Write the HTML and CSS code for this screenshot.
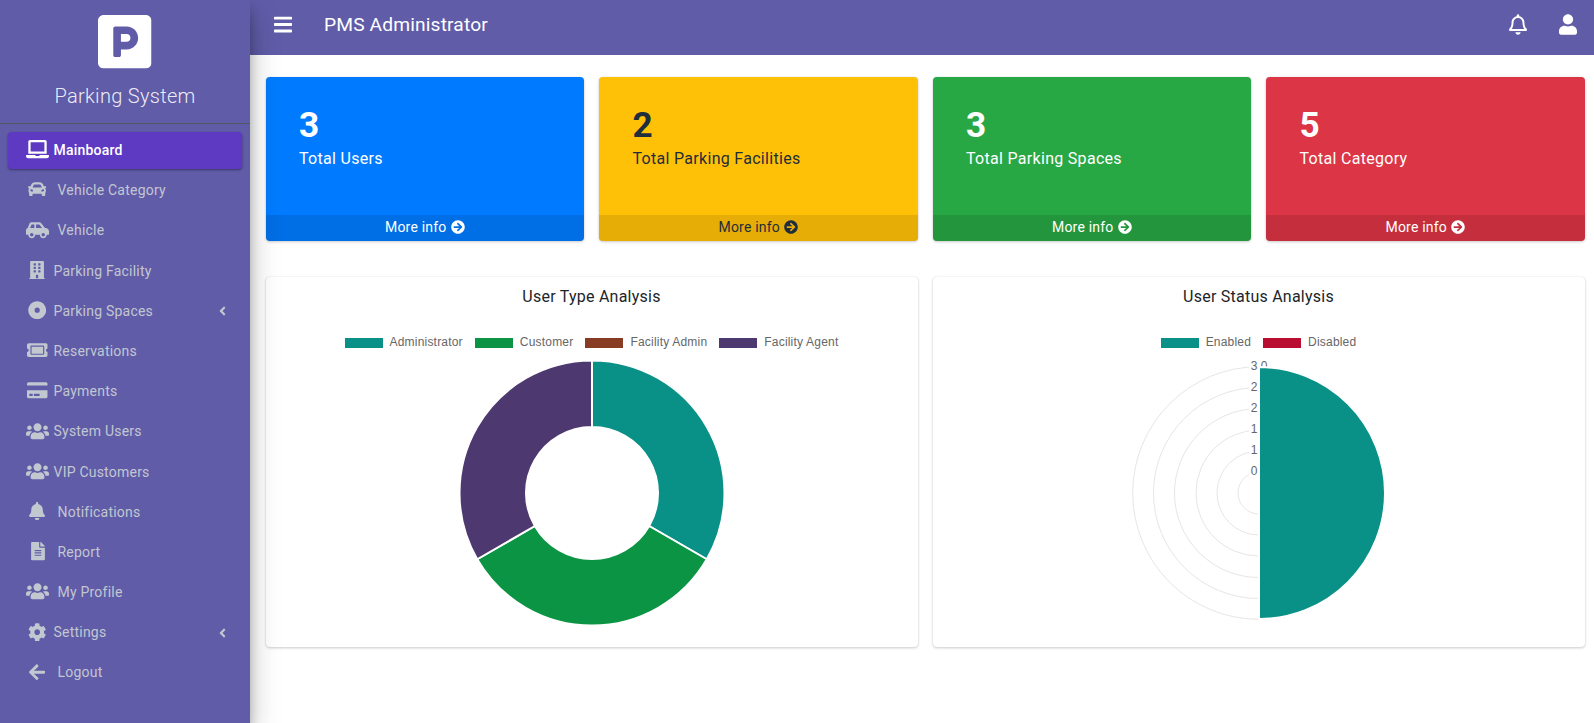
FILE: index.html
```html
<!DOCTYPE html>
<html lang="en">
<head>
<meta charset="utf-8">
<title>PMS Administrator</title>
<link rel="stylesheet" href="styles.css">
</head>
<body>
<svg class="defs" aria-hidden="true">
  <symbol id="i-bars" viewBox="0 0 448 512"><path d="M16 132h416c8.837 0 16-7.163 16-16V76c0-8.837-7.163-16-16-16H16C7.163 60 0 67.163 0 76v40c0 8.837 7.163 16 16 16zm0 160h416c8.837 0 16-7.163 16-16v-40c0-8.837-7.163-16-16-16H16c-8.837 0-16 7.163-16 16v40c0 8.837 7.163 16 16 16zm0 160h416c8.837 0 16-7.163 16-16v-40c0-8.837-7.163-16-16-16H16c-8.837 0-16 7.163-16 16v40c0 8.837 7.163 16 16 16z"/></symbol>
  <symbol id="i-bell-o" viewBox="0 0 448 512"><path d="M439.39 362.29c-19.32-20.76-55.47-51.99-55.47-154.29 0-77.7-54.48-139.9-127.94-155.16V32c0-17.67-14.32-32-31.98-32s-31.98 14.33-31.98 32v20.84C118.56 68.1 64.08 130.3 64.08 208c0 102.3-36.15 133.53-55.47 154.29-6 6.45-8.66 14.16-8.61 21.71.11 16.4 12.98 32 32.1 32h383.8c19.12 0 32-15.6 32.1-32 .05-7.55-2.61-15.27-8.61-21.71zM67.53 368c21.22-27.97 44.42-74.33 44.53-159.42 0-.2-.06-.38-.06-.58 0-61.86 50.14-112 112-112s112 50.14 112 112c0 .2-.06.38-.06.58.11 85.1 23.31 131.46 44.53 159.42H67.53zM224 512c35.32 0 63.97-28.65 63.97-64H160.03c0 35.35 28.65 64 63.97 64z"/></symbol>
  <symbol id="i-bell" viewBox="0 0 448 512"><path d="M224 512c35.32 0 63.97-28.65 63.97-64H160.03c0 35.35 28.65 64 63.97 64zm215.39-149.71c-19.32-20.76-55.47-51.99-55.47-154.29 0-77.7-54.48-139.9-127.94-155.16V32c0-17.67-14.32-32-31.98-32s-31.98 14.33-31.98 32v20.84C118.56 68.1 64.08 130.3 64.08 208c0 102.3-36.15 133.53-55.47 154.29-6 6.45-8.66 14.16-8.61 21.71.11 16.4 12.98 32 32.1 32h383.8c19.12 0 32-15.6 32.1-32 .05-7.55-2.61-15.27-8.61-21.71z"/></symbol>
  <symbol id="i-user" viewBox="0 0 448 512"><path d="M224 256c70.7 0 128-57.3 128-128S294.7 0 224 0 96 57.3 96 128s57.3 128 128 128zm89.6 32h-16.7c-22.2 10.2-46.9 16-72.9 16s-50.6-5.8-72.9-16h-16.7C60.2 288 0 348.2 0 422.4V464c0 26.5 21.5 48 48 48h352c26.5 0 48-21.5 48-48v-41.6c0-74.2-60.2-134.4-134.4-134.4z"/></symbol>
  <symbol id="i-arrow-c" viewBox="0 0 512 512"><path d="M256 8c137 0 248 111 248 248S393 504 256 504 8 393 8 256 119 8 256 8zm-28.9 143.6l75.5 72.4H120c-13.3 0-24 10.7-24 24v16c0 13.3 10.7 24 24 24h182.6l-75.5 72.4c-9.7 9.3-9.9 24.8-.4 34.3l11 10.9c9.4 9.4 24.6 9.4 33.9 0L404.3 273c9.4-9.4 9.4-24.6 0-33.9L271.6 106.3c-9.4-9.4-24.6-9.4-33.9 0l-11 10.9c-9.5 9.6-9.3 25.1.4 34.4z"/></symbol>
  <symbol id="i-arrow-l" viewBox="0 0 448 512"><path d="M257.5 445.1l-22.2 22.2c-9.4 9.4-24.6 9.4-33.9 0L7 273c-9.4-9.4-9.4-24.6 0-33.9L201.4 44.7c9.4-9.4 24.6-9.4 33.9 0l22.2 22.2c9.5 9.5 9.3 25-.4 34.3L136.6 216H424c13.3 0 24 10.7 24 24v32c0 13.3-10.7 24-24 24H136.6l120.5 114.8c9.8 9.3 10 24.8.4 34.3z"/></symbol>
  <symbol id="i-angle" viewBox="0 0 256 512"><path d="M31.7 239l136-136c9.4-9.4 24.6-9.4 33.9 0l22.6 22.6c9.4 9.4 9.4 24.6 0 33.9L127.9 256l96.4 96.4c9.4 9.4 9.4 24.6 0 33.9L201.7 409c-9.4 9.4-24.6 9.4-33.9 0l-136-136c-9.5-9.4-9.5-24.6-.1-34z"/></symbol>
  <symbol id="i-users" viewBox="0 0 640 512"><path d="M96 224c35.3 0 64-28.7 64-64s-28.7-64-64-64-64 28.7-64 64 28.7 64 64 64zm448 0c35.3 0 64-28.7 64-64s-28.7-64-64-64-64 28.7-64 64 28.7 64 64 64zm32 32h-64c-17.6 0-33.5 7.1-45.1 18.6 40.3 22.1 68.9 62 75.1 109.4h66c17.7 0 32-14.3 32-32v-32c0-35.3-28.7-64-64-64zm-256 0c61.9 0 112-50.1 112-112S381.9 32 320 32 208 82.1 208 144s50.1 112 112 112zm76.8 32h-8.3c-20.8 10-43.9 16-68.5 16s-47.6-6-68.5-16h-8.3C179.6 288 128 339.6 128 403.2V432c0 26.5 21.5 48 48 48h288c26.5 0 48-21.5 48-48v-28.8c0-63.6-51.6-115.2-115.2-115.2zm-223.7-13.4C161.5 263.1 145.6 256 128 256H64c-35.3 0-64 28.7-64 64v32c0 17.7 14.3 32 32 32h65.9c6.3-47.4 34.9-87.3 75.2-109.4z"/></symbol>
  <symbol id="i-cog" viewBox="0 0 512 512"><path d="M487.4 315.7l-42.6-24.6c4.3-23.2 4.3-47 0-70.2l42.6-24.6c4.9-2.8 7.1-8.6 5.5-14-11.1-35.6-30-67.8-54.7-94.6-3.8-4.1-10-5.1-14.8-2.3L380.8 110c-17.9-15.4-38.5-27.3-60.8-35.1V25.8c0-5.6-3.9-10.5-9.4-11.7-36.7-8.2-74.3-7.8-109.2 0-5.5 1.2-9.4 6.1-9.4 11.7V75c-22.2 7.9-42.8 19.8-60.8 35.1L88.7 85.5c-4.9-2.8-11-1.9-14.8 2.3-24.7 26.7-43.6 58.9-54.7 94.6-1.7 5.4.6 11.2 5.5 14L67.3 221c-4.3 23.2-4.3 47 0 70.2l-42.6 24.6c-4.9 2.8-7.1 8.6-5.5 14 11.1 35.6 30 67.8 54.7 94.6 3.8 4.1 10 5.1 14.8 2.3l42.6-24.6c17.9 15.4 38.5 27.3 60.8 35.1v49.2c0 5.6 3.9 10.5 9.4 11.7 36.7 8.2 74.3 7.8 109.2 0 5.5-1.2 9.4-6.1 9.4-11.7v-49.2c22.2-7.9 42.8-19.8 60.8-35.1l42.6 24.6c4.9 2.8 11 1.9 14.8-2.3 24.7-26.7 43.6-58.9 54.7-94.6 1.5-5.5-.7-11.3-5.6-14.1zM256 336c-44.1 0-80-35.9-80-80s35.9-80 80-80 80 35.9 80 80-35.9 80-80 80z"/></symbol>
  <symbol id="i-file" viewBox="0 0 384 512"><path d="M224 136V0H24C10.7 0 0 10.7 0 24v464c0 13.3 10.7 24 24 24h336c13.3 0 24-10.7 24-24V160H248c-13.2 0-24-10.8-24-24zm64 236c0 6.6-5.4 12-12 12H108c-6.6 0-12-5.4-12-12v-8c0-6.6 5.4-12 12-12h168c6.6 0 12 5.4 12 12v8zm0-64c0 6.6-5.4 12-12 12H108c-6.6 0-12-5.4-12-12v-8c0-6.6 5.4-12 12-12h168c6.6 0 12 5.4 12 12v8zm0-72v8c0 6.6-5.4 12-12 12H108c-6.6 0-12-5.4-12-12v-8c0-6.6 5.4-12 12-12h168c6.6 0 12 5.4 12 12zm96-114.1v6.1H256V0h6.1c6.4 0 12.5 2.5 17 7l97.9 98c4.5 4.5 7 10.6 7 16.9z"/></symbol>
  <symbol id="i-disc" viewBox="0 0 512 512"><path fill-rule="evenodd" d="M256 8c137 0 248 111 248 248S393 504 256 504 8 393 8 256 119 8 256 8zm0 176a72 72 0 1 0 0 144 72 72 0 1 0 0-144z"/></symbol>
  <symbol id="i-laptop" viewBox="0 0 640 512"><path d="M624 416H381.54c-.74 19.81-14.71 32-32.74 32H288c-18.69 0-33.02-17.47-32.77-32H16c-8.8 0-16 7.2-16 16v16c0 35.2 28.8 64 64 64h512c35.2 0 64-28.8 64-64v-16c0-8.8-7.2-16-16-16zM576 48c0-26.4-21.6-48-48-48H112C85.6 0 64 21.6 64 48v336h512V48zm-64 272H128V64h384v256z"/></symbol>
  <symbol id="i-car" viewBox="0 0 512 512"><path d="M499.99 176h-59.87l-16.64-41.6C406.38 91.63 365.57 64 319.5 64h-127c-46.06 0-86.88 27.63-103.99 70.4L71.87 176H12.01C4.2 176-1.53 183.34.37 190.91l6 24C7.7 220.25 12.5 224 18.01 224h20.07C24.65 235.73 16 252.78 16 272v48c0 16.12 6.16 30.67 16 41.93V416c0 17.67 14.33 32 32 32h32c17.67 0 32-14.33 32-32v-32h256v32c0 17.67 14.33 32 32 32h32c17.67 0 32-14.33 32-32v-54.07c9.84-11.25 16-25.8 16-41.93v-48c0-19.22-8.65-36.27-22.07-48H494c5.51 0 10.31-3.75 11.64-9.09l6-24c1.89-7.57-3.84-14.91-11.65-14.91zm-352.06-17.83c7.29-18.22 24.94-30.17 44.57-30.17h127c19.63 0 37.28 11.95 44.57 30.17L384 208H128l19.93-49.83zM96 319.8c-19.2 0-32-12.76-32-31.9S76.8 256 96 256s48 28.71 48 47.85-28.8 15.95-48 15.95zm320 0c-19.2 0-48 3.19-48-15.95S396.8 256 416 256s32 12.76 32 31.9-12.8 31.9-32 31.9z"/></symbol>
  <symbol id="i-car-side" viewBox="0 0 640 512"><path d="M544 192h-16L419.22 56.02A64.025 64.025 0 0 0 369.24 32H155.33c-26.17 0-49.7 15.93-59.42 40.23L48 194.26C20.44 201.4 0 226.21 0 256v112c0 8.84 7.16 16 16 16h48c0 53.02 42.98 96 96 96s96-42.98 96-96h128c0 53.02 42.98 96 96 96s96-42.98 96-96h48c8.84 0 16-7.16 16-16v-80c0-53.02-42.98-96-96-96zM160 432c-26.47 0-48-21.53-48-48s21.53-48 48-48 48 21.53 48 48-21.53 48-48 48zm72-240H116.93l38.4-96H232v96zm48 0V96h89.24l76.8 96H280zm200 240c-26.47 0-48-21.53-48-48s21.53-48 48-48 48 21.53 48 48-21.53 48-48 48z"/></symbol>
  <symbol id="i-building" viewBox="0 0 448 512"><path d="M436 480h-20V24c0-13.255-10.745-24-24-24H56C42.745 0 32 10.745 32 24v456H12c-6.627 0-12 5.373-12 12v20h448v-20c0-6.627-5.373-12-12-12zM128 76c0-6.627 5.373-12 12-12h40c6.627 0 12 5.373 12 12v40c0 6.627-5.373 12-12 12h-40c-6.627 0-12-5.373-12-12V76zm0 96c0-6.627 5.373-12 12-12h40c6.627 0 12 5.373 12 12v40c0 6.627-5.373 12-12 12h-40c-6.627 0-12-5.373-12-12v-40zm52 148h-40c-6.627 0-12-5.373-12-12v-40c0-6.627 5.373-12 12-12h40c6.627 0 12 5.373 12 12v40c0 6.627-5.373 12-12 12zm76 160h-64v-84c0-6.627 5.373-12 12-12h40c6.627 0 12 5.373 12 12v84zm64-172c0 6.627-5.373 12-12 12h-40c-6.627 0-12-5.373-12-12v-40c0-6.627 5.373-12 12-12h40c6.627 0 12 5.373 12 12v40zm0-96c0 6.627-5.373 12-12 12h-40c-6.627 0-12-5.373-12-12v-40c0-6.627 5.373-12 12-12h40c6.627 0 12 5.373 12 12v40zm0-96c0 6.627-5.373 12-12 12h-40c-6.627 0-12-5.373-12-12V76c0-6.627 5.373-12 12-12h40c6.627 0 12 5.373 12 12v40z"/></symbol>
  <symbol id="i-ticket" viewBox="0 0 576 512"><path d="M128 160h320v192H128V160zm400 96c0 26.51 21.49 48 48 48v96c0 26.51-21.49 48-48 48H48c-26.51 0-48-21.49-48-48v-96c26.51 0 48-21.49 48-48s-21.49-48-48-48v-96c0-26.51 21.49-48 48-48h480c26.51 0 48 21.49 48 48v96c-26.51 0-48 21.49-48 48zm-48-104c0-13.255-10.745-24-24-24H120c-13.255 0-24 10.745-24 24v208c0 13.255 10.745 24 24 24h336c13.255 0 24-10.745 24-24V152z"/></symbol>
  <symbol id="i-card" viewBox="0 0 576 512"><path d="M0 432c0 26.5 21.5 48 48 48h480c26.5 0 48-21.5 48-48V256H0v176zm192-68c0-6.6 5.4-12 12-12h136c6.6 0 12 5.4 12 12v40c0 6.6-5.4 12-12 12H204c-6.6 0-12-5.4-12-12v-40zm-128 0c0-6.6 5.4-12 12-12h72c6.6 0 12 5.4 12 12v40c0 6.6-5.4 12-12 12H76c-6.6 0-12-5.4-12-12v-40zM576 80v48H0V80c0-26.5 21.5-48 48-48h480c26.5 0 48 21.5 48 48z"/></symbol>
  <symbol id="i-parking" viewBox="0 32 448 448"><path d="M400 32H48C21.5 32 0 53.5 0 80v352c0 26.5 21.5 48 48 48h352c26.5 0 48-21.5 48-48V80c0-26.5-21.5-48-48-48zM240 320h-48v48c0 8.8-7.2 16-16 16h-32c-8.8 0-16-7.2-16-16V144c0-8.8 7.2-16 16-16h96c52.9 0 96 43.1 96 96s-43.1 96-96 96zm0-128h-48v64h48c17.6 0 32-14.4 32-32s-14.4-32-32-32z"/></symbol>
</svg>

<div class="app">
  <aside class="sidebar">
    <div class="brand">
      <svg class="brand-logo"><use href="#i-parking"/></svg>
      <div class="brand-name">Parking System</div>
    </div>
    <nav class="nav">
      <a class="nav-item active"><span class="nav-icon"><svg class="w23"><use href="#i-laptop"/></svg></span><span class="nav-text">Mainboard</span></a>
      <a class="nav-item wide"><span class="nav-icon"><svg class="w18"><use href="#i-car"/></svg></span><span class="nav-text">Vehicle Category</span></a>
      <a class="nav-item wide"><span class="nav-icon"><svg class="w23"><use href="#i-car-side"/></svg></span><span class="nav-text">Vehicle</span></a>
      <a class="nav-item"><span class="nav-icon"><svg class="w16"><use href="#i-building"/></svg></span><span class="nav-text">Parking Facility</span></a>
      <a class="nav-item"><span class="nav-icon"><svg class="w18"><use href="#i-disc"/></svg></span><span class="nav-text">Parking Spaces</span><svg class="chevron"><use href="#i-angle"/></svg></a>
      <a class="nav-item"><span class="nav-icon"><svg class="w21"><use href="#i-ticket"/></svg></span><span class="nav-text">Reservations</span></a>
      <a class="nav-item"><span class="nav-icon"><svg class="w21"><use href="#i-card"/></svg></span><span class="nav-text">Payments</span></a>
      <a class="nav-item"><span class="nav-icon"><svg class="w23"><use href="#i-users"/></svg></span><span class="nav-text">System Users</span></a>
      <a class="nav-item"><span class="nav-icon"><svg class="w23"><use href="#i-users"/></svg></span><span class="nav-text">VIP Customers</span></a>
      <a class="nav-item wide"><span class="nav-icon"><svg class="w16"><use href="#i-bell"/></svg></span><span class="nav-text">Notifications</span></a>
      <a class="nav-item wide"><span class="nav-icon"><svg class="w14"><use href="#i-file"/></svg></span><span class="nav-text">Report</span></a>
      <a class="nav-item wide"><span class="nav-icon"><svg class="w23"><use href="#i-users"/></svg></span><span class="nav-text">My Profile</span></a>
      <a class="nav-item"><span class="nav-icon"><svg class="w18"><use href="#i-cog"/></svg></span><span class="nav-text">Settings</span><svg class="chevron"><use href="#i-angle"/></svg></a>
      <a class="nav-item wide"><span class="nav-icon"><svg class="w16"><use href="#i-arrow-l"/></svg></span><span class="nav-text">Logout</span></a>
    </nav>
  </aside>

  <main class="main">
    <header class="topbar">
      <svg class="topbar-menu"><use href="#i-bars"/></svg>
      <div class="topbar-title">PMS Administrator</div>
      <svg class="topbar-bell"><use href="#i-bell-o"/></svg>
      <svg class="topbar-user"><use href="#i-user"/></svg>
    </header>

    <div class="content">
      <section class="stats">
        <article class="stat stat-blue">
          <div class="stat-body"><div class="stat-num">3</div><div class="stat-label">Total Users</div></div>
          <div class="stat-foot">More info <svg class="foot-icon"><use href="#i-arrow-c"/></svg></div>
        </article>
        <article class="stat stat-yellow">
          <div class="stat-body"><div class="stat-num">2</div><div class="stat-label">Total Parking Facilities</div></div>
          <div class="stat-foot">More info <svg class="foot-icon"><use href="#i-arrow-c"/></svg></div>
        </article>
        <article class="stat stat-green">
          <div class="stat-body"><div class="stat-num">3</div><div class="stat-label">Total Parking Spaces</div></div>
          <div class="stat-foot">More info <svg class="foot-icon"><use href="#i-arrow-c"/></svg></div>
        </article>
        <article class="stat stat-red">
          <div class="stat-body"><div class="stat-num">5</div><div class="stat-label">Total Category</div></div>
          <div class="stat-foot">More info <svg class="foot-icon"><use href="#i-arrow-c"/></svg></div>
        </article>
      </section>

      <section class="charts">
        <article class="chart-card">
          <h2 class="chart-title">User Type Analysis</h2>
          <div class="legend">
            <div class="legend-item"><span class="swatch c-teal"></span>Administrator</div>
            <div class="legend-item"><span class="swatch c-green"></span>Customer</div>
            <div class="legend-item"><span class="swatch c-brown"></span>Facility Admin</div>
            <div class="legend-item"><span class="swatch c-purple"></span>Facility Agent</div>
          </div>
          <svg class="chart" viewBox="-150 -140 300 280">
            <path class="seg f-teal" d="M0 -132.5A132.5 132.5 0 0 1 114.75 66.25L57.16 33A66 66 0 0 0 0 -66Z"/>
            <path class="seg f-green" d="M114.75 66.25A132.5 132.5 0 0 1 -114.75 66.25L-57.16 33A66 66 0 0 0 57.16 33Z"/>
            <path class="seg f-purple" d="M-114.75 66.25A132.5 132.5 0 0 1 0 -132.5L0 -66A66 66 0 0 0 -57.16 33Z"/>
          </svg>
        </article>
        <article class="chart-card">
          <h2 class="chart-title">User Status Analysis</h2>
          <div class="legend">
            <div class="legend-item"><span class="swatch c-teal"></span>Enabled</div>
            <div class="legend-item"><span class="swatch c-red"></span>Disabled</div>
          </div>
          <svg class="chart" viewBox="-150 -140 300 280">
            <circle class="ring" r="21"/><circle class="ring" r="42"/><circle class="ring" r="63"/>
            <circle class="ring" r="84.5"/><circle class="ring" r="105.5"/><circle class="ring" r="126.3"/>
            <rect class="tick-bg" x="-10" y="-133" width="20" height="13"/>
            <rect class="tick-bg" x="-10" y="-112" width="20" height="13"/>
            <rect class="tick-bg" x="-10" y="-91" width="20" height="13"/>
            <rect class="tick-bg" x="-10" y="-70" width="20" height="13"/>
            <rect class="tick-bg" x="-10" y="-49" width="20" height="13"/>
            <rect class="tick-bg" x="-10" y="-28" width="20" height="13"/>
            <text class="tick" y="-123.5">3.0</text>
            <text class="tick" y="-102">2.5</text>
            <text class="tick" y="-81">2.0</text>
            <text class="tick" y="-60">1.5</text>
            <text class="tick" y="-39">1.0</text>
            <text class="tick" y="-18">0.5</text>
            <path class="seg f-teal" d="M0 -126A126 126 0 0 1 0 126Z"/>
          </svg>
        </article>
      </section>
    </div>
  </main>
</div>
</body>
</html>
```

FILE: styles.css
```css
* { box-sizing: border-box; }
html, body { margin: 0; height: 100%; overflow: hidden; }
body { font-family: Roboto, "Liberation Sans", sans-serif; font-size: 14px; color: #212529; background: #fff; }
.defs { display: none; }
svg { fill: currentColor; display: block; }

.app { display: flex; height: 723px; }

.sidebar {
  width: 250px; flex: none; background: #605ca8; position: relative; z-index: 2;
  box-shadow: 0 14px 28px rgba(0,0,0,.25), 0 10px 10px rgba(0,0,0,.22);
}
.brand { height: 124px; padding-top: 15px; border-bottom: 1px solid #4f5962; display: flex; flex-direction: column; align-items: center; }
.brand-logo { width: 53.5px; height: 53.5px; color: #fff; }
.brand-name { margin-top: 12px; font-size: 20px; font-weight: 300; line-height: 30px; letter-spacing: .3px; color: rgba(255,255,255,.9); }

.nav { padding: 8px 8px 0; display: flex; flex-direction: column; gap: 3.2px; }
.nav-item { display: flex; align-items: center; height: 37px; padding: 0 17px; color: #c2c7d0; border-radius: 4px; line-height: 21px; letter-spacing: .22px; }
.nav-item.active { background: #5e3ac2; color: #fff; box-shadow: 0 1px 3px rgba(0,0,0,.2), 0 1px 2px rgba(0,0,0,.24); font-weight: 500; }
.nav-icon { width: 25px; flex: none; display: flex; justify-content: center; margin-top: -2px; }
.nav-text { margin-left: 3.5px; }
.wide .nav-text { margin-left: 7.5px; }
.w14 { width: 14px; height: 18.4px; }
.w16 { width: 16.1px; height: 18.4px; }
.w18 { width: 18.4px; height: 18.4px; }
.w21 { width: 20.7px; height: 18.4px; }
.w23 { width: 23px; height: 18.4px; }
.chevron { width: 7px; height: 14px; margin-left: auto; margin-right: -1px; }

.main { flex: 1; min-width: 0; display: flex; flex-direction: column; }
.topbar { height: 55px; flex: none; background: #605ca8; color: #fff; display: flex; align-items: center; padding: 0 0 6px 23.5px; }
.topbar-menu { width: 18px; height: 21px; }
.topbar-title { margin-left: 32.5px; font-size: 19.2px; line-height: 27px; letter-spacing: .15px; }
.topbar-bell { width: 18px; height: 21px; margin-left: auto; }
.topbar-user { width: 18px; height: 21px; margin-left: 32px; margin-right: 17px; }

.content { padding: 22px 9.5px 0 15.5px; }
.stats { display: grid; grid-template-columns: repeat(4, 1fr); gap: 15px; }
.stat { height: 164px; border-radius: 4px; overflow: hidden; display: flex; flex-direction: column; box-shadow: 0 0 1px rgba(0,0,0,.125), 0 1px 3px rgba(0,0,0,.2); color: #fff; }
.stat-blue { background: #007bff; }
.stat-yellow { background: #ffc107; color: #1f2d3d; }
.stat-green { background: #28a745; }
.stat-red { background: #dc3545; }
.stat-body { flex: 1; padding: 27px 33px 0 33.5px; }
.stat-num { font-size: 35.2px; font-weight: 700; line-height: 42px; }
.stat-label { font-size: 16px; line-height: 24px; margin-top: 1px; letter-spacing: .3px; }
.stat-foot { height: 26px; padding-bottom: 2px; background: rgba(0,0,0,.1); display: flex; align-items: center; justify-content: center; gap: 4px; font-size: 14px; letter-spacing: .2px; }
.foot-icon { width: 14px; height: 14px; }

.charts { display: grid; grid-template-columns: 1fr 1fr; gap: 15px; margin-top: 36px; }
.chart-card { height: 370px; border-radius: 4px; background: #fff; box-shadow: 0 0 1px rgba(0,0,0,.125), 0 1px 3px rgba(0,0,0,.2); padding-top: 8px; }
.chart-title { margin: 0; text-align: center; font-size: 16px; font-weight: 400; line-height: 24px; letter-spacing: .24px; color: #212529; }
.legend { margin-top: 26px; height: 15px; display: flex; justify-content: center; gap: 12px; font-family: "Liberation Sans", Arial, sans-serif; font-size: 12px; letter-spacing: .2px; color: #666; }
.legend-item { display: flex; align-items: center; gap: 7px; line-height: 15px; }
.swatch { width: 38px; height: 10px; }
.c-teal { background: #0a9187; }
.c-green { background: #0b9444; }
.c-brown { background: #873c23; }
.c-purple { background: #4d3870; }
.c-red { background: #b90e32; }
.chart { width: 300px; height: 280px; margin: 2.5px auto 0; }
.seg { stroke: #fff; stroke-width: 2; }
.f-teal { fill: #0a9187; }
.f-green { fill: #0b9444; }
.f-purple { fill: #4d3870; }
.ring { fill: none; stroke: #e6e6e6; stroke-width: 1; }
.tick-bg { fill: #fff; }
.tick { font-family: "Liberation Sans", Arial, sans-serif; font-size: 12px; fill: #666; text-anchor: middle; }
```
